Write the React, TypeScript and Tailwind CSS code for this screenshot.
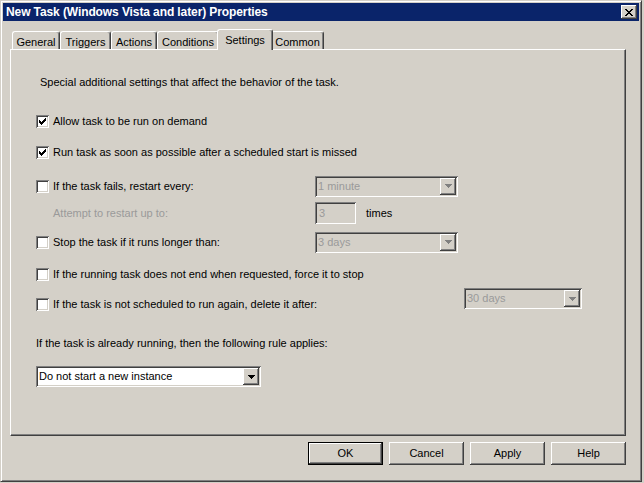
import React from "react";

const raised =
  "shadow-[inset_-1px_-1px_0_#404040,inset_1px_1px_0_#ffffff,inset_-2px_-2px_0_#808080]";
const sunken =
  "shadow-[inset_1px_1px_0_#808080,inset_-1px_-1px_0_#ffffff,inset_2px_2px_0_#404040,inset_-2px_-2px_0_#d4d0c8]";

function CheckBox({ checked }: { checked?: boolean }) {
  return (
    <div className={`w-[13px] h-[13px] flex-none bg-white ${sunken} flex items-center justify-center`}>
      {checked && (
        <svg width="7" height="7" viewBox="0 0 7 7" shapeRendering="crispEdges">
          <path
            d="M0 2h1v3h-1zM1 3h1v3h-1zM2 4h1v3h-1zM3 3h1v3h-1zM4 2h1v3h-1zM5 1h1v3h-1zM6 0h1v3h-1z"
            fill="#000"
          />
        </svg>
      )}
    </div>
  );
}

function Arrow({ disabled }: { disabled?: boolean }) {
  return (
    <div className={`w-[16px] h-[17px] flex-none bg-[#d4d0c8] ${raised} flex items-center justify-center`}>
      <svg width="7" height="4" viewBox="0 0 7 4" shapeRendering="crispEdges">
        <path d="M0 0h7v1h-7zM1 1h5v1h-5zM2 2h3v1h-3zM3 3h1v1h-1z" fill={disabled ? "#808080" : "#000"} />
      </svg>
    </div>
  );
}

function Combo({ text, disabled, widthClass }: { text: string; disabled?: boolean; widthClass: string }) {
  return (
    <div
      className={`${widthClass} h-[21px] flex-none flex items-center p-[2px] ${sunken} ${
        disabled ? "bg-[#d4d0c8] text-[#9a9a9a]" : "bg-white text-black"
      }`}
    >
      <div className="flex-1 pl-[1px] leading-none truncate">{text}</div>
      <Arrow disabled={disabled} />
    </div>
  );
}

function Tab({ label, widthClass, selected }: { label: string; widthClass: string; selected?: boolean }) {
  if (selected) {
    return (
      <div
        className={`${widthClass} h-[21px] -mb-[1px] -mx-[2px] relative z-10 bg-[#d4d0c8] border-t border-l border-r border-t-white border-l-white border-r-[#404040] rounded-t-[3px] shadow-[inset_-1px_0_0_#808080] flex justify-center pt-[2px]`}
      >
        {label}
      </div>
    );
  }
  return (
    <div
      className={`${widthClass} h-[18px] bg-[#d4d0c8] border-t border-l border-r border-t-white border-l-white border-r-[#404040] rounded-t-[3px] shadow-[inset_-1px_0_0_#808080] flex justify-center pt-[2px]`}
    >
      {label}
    </div>
  );
}

function Button({ label, isDefault }: { label: string; isDefault?: boolean }) {
  return (
    <div
      className={`w-[75px] h-[23px] flex items-center justify-center bg-[#d4d0c8] ${
        isDefault
          ? "border border-black shadow-[inset_-1px_-1px_0_#404040,inset_1px_1px_0_#ffffff,inset_-2px_-2px_0_#808080]"
          : raised
      }`}
    >
      {label}
    </div>
  );
}

export default function App() {
  return (
    <div className="w-[644px] h-[483px] bg-[#d4d0c8] text-[11px] text-black font-['Liberation_Sans',Arial,sans-serif] overflow-hidden">
      <div className="w-[642px] h-[482px] border-t border-l border-r border-b border-t-[#d4d0c8] border-l-[#d4d0c8] border-r-[#404040] border-b-[#404040] shadow-[inset_1px_1px_0_#ffffff,inset_-1px_-1px_0_#808080] pt-[2px] pl-[2px] pr-[2px] flex flex-col">
        {/* title bar */}
        <div className="h-[18px] bg-[#0a246a] flex items-center pl-[3px] pr-[2px]">
          <div className="flex-1 text-white font-bold text-[12px] leading-none tracking-[-0.1px]">
            New Task (Windows Vista and later) Properties
          </div>
          <div className={`w-[16px] h-[14px] bg-[#d4d0c8] ${raised} flex items-center justify-center`}>
            <svg width="8" height="7" viewBox="0 0 8 7" shapeRendering="crispEdges">
              <path
                d="M0 0h2v1h-2zM6 0h2v1h-2zM1 1h2v1h-2zM5 1h2v1h-2zM2 2h4v1h-4zM3 3h2v1h-2zM2 4h4v1h-4zM1 5h2v1h-2zM5 5h2v1h-2zM0 6h2v1h-2zM6 6h2v1h-2z"
                fill="#000"
              />
            </svg>
          </div>
        </div>

        <div className="ml-[7px] w-[616px] flex flex-col">
          {/* tabs */}
          <div className="mt-[8px] h-[20px] flex items-end pl-[2px]">
            <Tab label="General" widthClass="w-[48px]" />
            <Tab label="Triggers" widthClass="w-[51px]" />
            <Tab label="Actions" widthClass="w-[46px]" />
            <Tab label="Conditions" widthClass="w-[62px]" />
            <Tab label="Settings" widthClass="w-[56px]" selected />
            <Tab label="Common" widthClass="w-[53px]" />
          </div>

          {/* panel */}
          <div className="h-[387px] border border-t-white border-l-white border-r-[#404040] border-b-[#404040] shadow-[inset_-1px_-1px_0_#808080] pl-[25px] flex flex-col">
            <div className="mt-[22px] h-[20px] flex items-center pl-[4px]">
              Special additional settings that affect the behavior of the task.
            </div>

            <div className="mt-[19px] h-[20px] flex items-center">
              <CheckBox checked />
              <div className="ml-[4px]">Allow task to be run on demand</div>
            </div>

            <div className="mt-[11px] h-[20px] flex items-center">
              <CheckBox checked />
              <div className="ml-[4px]">Run task as soon as possible after a scheduled start is missed</div>
            </div>

            <div className="mt-[13px] h-[22px] flex items-center">
              <CheckBox />
              <div className="ml-[4px] w-[262px] flex-none">If the task fails, restart every:</div>
              <Combo text="1 minute" disabled widthClass="w-[143px]" />
            </div>

            <div className="mt-[5px] h-[22px] flex items-center">
              <div className="w-[17px] flex-none" />
              <div className="w-[262px] flex-none text-[#9a9a9a]">Attempt to restart up to:</div>
              <div className={`w-[41px] h-[22px] flex-none bg-[#d4d0c8] ${sunken} flex items-center pl-[4px] text-[#9a9a9a]`}>
                3
              </div>
              <div className="ml-[10px]">times</div>
            </div>

            <div className="mt-[7px] h-[22px] flex items-center">
              <CheckBox />
              <div className="ml-[4px] w-[262px] flex-none">Stop the task if it runs longer than:</div>
              <Combo text="3 days" disabled widthClass="w-[143px]" />
            </div>

            <div className="mt-[11px] h-[20px] flex items-center">
              <CheckBox />
              <div className="ml-[4px]">If the running task does not end when requested, force it to stop</div>
            </div>

            <div className="mt-[9px] h-[22px] flex items-center">
              <CheckBox />
              <div className="ml-[4px] w-[411px] flex-none">If the task is not scheduled to run again, delete it after:</div>
              <div className="mb-[11px]">
                <Combo text="30 days" disabled widthClass="w-[118px]" />
              </div>
            </div>

            <div className="mt-[18px] h-[20px] flex items-center">
              If the task is already running, then the following rule applies:
            </div>

            <div className="mt-[13px] flex">
              <Combo text="Do not start a new instance" widthClass="w-[225px]" />
            </div>
          </div>

          {/* buttons */}
          <div className="mt-[6px] flex justify-end gap-[6px]">
            <Button label="OK" isDefault />
            <Button label="Cancel" />
            <Button label="Apply" />
            <Button label="Help" />
          </div>
        </div>
      </div>
    </div>
  );
}
